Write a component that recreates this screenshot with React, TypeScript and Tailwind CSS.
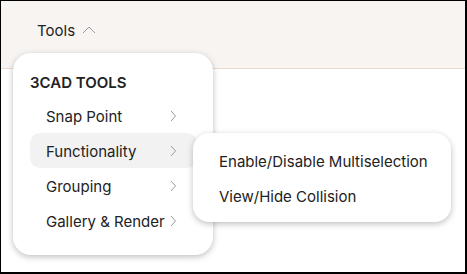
import React from "react";

const font = { fontFamily: "Inter, 'Noto Sans', sans-serif" };

function Chevron() {
  return (
    <svg width="8" height="12" viewBox="0 0 8 12" className="shrink-0 mt-[-3px]">
      <polyline points="2,1 6.5,6 2,11" fill="none" stroke="#9a9aa6" strokeWidth="1" />
    </svg>
  );
}

const items = ["Snap Point", "Functionality", "Grouping", "Gallery & Render"];

export default function App() {
  return (
    <div
      className="relative w-[467px] h-[274px] bg-white border-l border-t border-r-2 border-b-2 border-black overflow-hidden text-[#222]"
      style={font}
    >
      {/* Top bar */}
      <header className="h-[68px] bg-[#f8f4f1] border-b border-[#ead9cc] flex items-center pl-[36px] pb-[6px]">
        <span className="text-[15px]">Tools</span>
        <svg width="14" height="8" viewBox="0 0 14 8" className="ml-[7px] mt-[-3px]">
          <polyline points="1,7 7,1 13,7" fill="none" stroke="#9a9aa6" strokeWidth="1" />
        </svg>
      </header>

      {/* Dropdown */}
      <div className="absolute left-[12px] top-[52px] w-[200px] rounded-[18px] bg-white shadow-[0_2px_6px_rgba(0,0,0,0.25)] pt-[20px] pb-[17px] pl-[17px] pr-[16px]">
        <div className="text-[15px] font-semibold leading-[20px] mb-[5px]">3CAD TOOLS</div>
        {items.map((t) => (
          <div
            key={t}
            className={
              "h-[35px] flex items-center justify-between pt-[3px] pl-[16px] pr-[20px] rounded-[10px] text-[15px] " +
              (t === "Functionality" ? "bg-[#f2f2f2]" : "")
            }
          >
            <span className="whitespace-nowrap">{t}</span>
            <Chevron />
          </div>
        ))}
      </div>

      {/* Submenu */}
      <div className="absolute left-[192px] top-[132px] w-[258px] rounded-[16px] bg-white shadow-[0_2px_6px_rgba(0,0,0,0.25)] pt-[10px] pb-[9px] pl-[26px]">
        <div className="h-[35px] pt-[3px] flex items-center text-[15px] whitespace-nowrap">Enable/Disable Multiselection</div>
        <div className="h-[35px] pt-[3px] flex items-center text-[15px] whitespace-nowrap">View/Hide Collision</div>
      </div>
    </div>
  );
}
